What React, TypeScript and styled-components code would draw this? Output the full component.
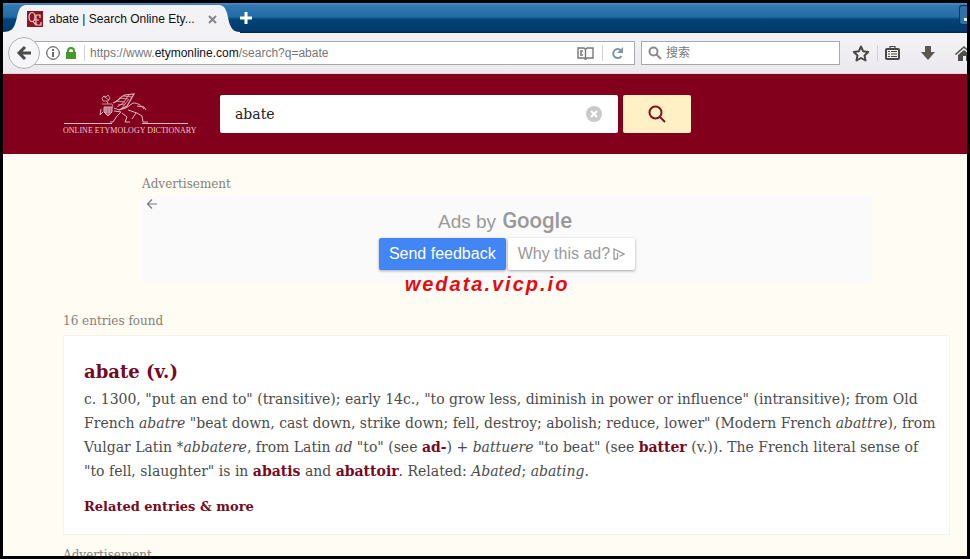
import React from "react";
import styled, { createGlobalStyle } from "styled-components";

const serif = `"DejaVu Serif", serif`;
const sans = `"Liberation Sans", "Noto Sans CJK SC", sans-serif`;

const GlobalStyle = createGlobalStyle`
  *, *::before, *::after { box-sizing: border-box; }
  html, body, #root { height: 100%; }
  body { margin: 0; background: #000; overflow: hidden; }
  button { border: 0; padding: 0; background: none; cursor: pointer; font: inherit; }
  input { border: 0; padding: 0; outline: 0; background: none; min-width: 0; }
  svg { display: block; flex: none; }
`;

const Frame = styled.div`
  height: 100%;
  padding: 3px;
  background: #000;
`;
const Browser = styled.div`
  display: flex;
  flex-direction: column;
  height: 100%;
  overflow: hidden;
  background: #fffcf3;
`;

const TabStrip = styled.div`
  display: flex;
  flex: none;
  height: 30px;
  background: linear-gradient(#4c8dc0 0, #2f78b0 3px, #226ba4 14px, #02457b 16px, #02396a 28px, #022448 30px);
`;
const TabEdge = styled.svg`
  height: 30px;
  fill: #f3f2f5;
`;
const Tab = styled.div`
  display: flex;
  align-items: center;
  width: 191px;
  height: 28px;
  margin-top: 2px;
  background: #f3f2f5;
  font: 12px/16px "Liberation Sans", sans-serif;
  color: #111;
`;
const TabTitle = styled.span`
  flex: 1;
  margin-left: 6px;
  white-space: nowrap;
`;
const StripButton = styled.button`
  display: grid;
  place-items: center;
  width: 12px;
  height: 30px;
`;
const WindowButton = styled.button`
  display: flex;
  align-items: flex-end;
  width: 8px;
  height: 20px;
  margin: 2px 0 0 auto;
  padding: 0 0 3px 4px;
  border: 1px solid #02345d;
  border-right: 0;
  border-radius: 3px 0 0 3px;
  background: #2e71a6;
`;

const Toolbar = styled.div`
  display: flex;
  align-items: center;
  flex: none;
  height: 41px;
  padding-left: 5px;
  overflow: hidden;
  background: linear-gradient(#f4f3f5, #ebe9ee);
  border-bottom: 1px solid #ddd8df;
`;
const BackButton = styled.button`
  z-index: 1;
  display: grid;
  place-items: center;
  flex: none;
  width: 32px;
  height: 32px;
  margin-right: -6px;
  border: 1px solid #b3b1b6;
  border-radius: 50%;
  background: #f6f5f8;
`;
const Field = styled.div<{ $fixed?: boolean }>`
  display: flex;
  align-items: center;
  flex: ${(p) => (p.$fixed ? "0 0 199px" : "1 1 0")};
  height: 24px;
  margin-right: ${(p) => (p.$fixed ? "12px" : "6px")};
  padding: ${(p) => (p.$fixed ? "0 6px" : "0 10px 0 11px")};
  border: 1px solid #aaa8ad;
  background: #fff;
  font: 12px/16px ${sans};
  color: #777;
`;
const Address = styled.div`
  flex: 1;
  margin-left: 5px;
  white-space: nowrap;
  b { font-weight: 400; color: #111; }
`;
const Rule = styled.i<{ $gap: number }>`
  flex: none;
  width: 1px;
  height: 16px;
  margin: 0 ${(p) => p.$gap}px;
  background: #d2d1d5;
`;
const QuickSearch = styled.input`
  flex: 1;
  margin-left: 4px;
  font: 12px/16px ${sans};
  color: #555;
  &::placeholder { color: #777; opacity: 1; }
`;
const Tools = styled.div`
  display: flex;
  align-items: center;
  flex: none;
  width: 115px;
  overflow: hidden;
`;
const ToolButton = styled.button<{ $gap: number }>`
  flex: none;
  margin-right: ${(p) => p.$gap}px;
`;

const SiteHeader = styled.header`
  display: flex;
  align-items: center;
  flex: none;
  height: 80px;
  padding-left: 60px;
  background: #82001b;
`;
const Logo = styled.a`
  flex: none;
  width: 132px;
  margin-right: 25px;
  padding-top: 2px;
  color: #ecc8cf;
  text-decoration: none;
`;
const LogoName = styled.span`
  display: block;
  font: 8px/14px "Liberation Serif", serif;
  white-space: nowrap;
`;
const SearchForm = styled.form`
  display: flex;
  gap: 5px;
  flex: 0 1 471px;
  height: 38px;
`;
const SearchBox = styled.div`
  display: flex;
  align-items: center;
  flex: 1;
  padding: 0 16px 0 15px;
  border-radius: 2px;
  background: #fff;
`;
const SearchInput = styled.input`
  flex: 1;
  font: 14px/24px ${serif};
  color: #222;
`;
const SearchButton = styled.button`
  display: grid;
  place-items: center;
  width: 68px;
  border-radius: 2px;
  background: #fff1c5;
`;

const Main = styled.main`
  flex: 1;
  min-height: 0;
  padding: 20px 17px 0 60px;
  overflow: hidden;
  font-family: ${serif};
`;
const Caption = styled.p`
  margin: 0;
  font-size: 12px;
  line-height: 20px;
  color: #83827e;
`;
const Banner = styled.section`
  margin: 0 78px 26px 79px;
`;
const AdBox = styled.div`
  display: grid;
  grid-template-columns: 20px 1fr 24px;
  align-items: start;
  height: 88px;
  margin: 1px 0 28px;
  padding: 4px 0 0 4px;
  background: #fafafa;
`;
const AdBody = styled.div`
  display: flex;
  flex-direction: column;
  align-items: center;
  font-family: "Liberation Sans", sans-serif;
  color: #999;
`;
const AdTitle = styled.div`
  display: flex;
  align-items: baseline;
  gap: 6px;
  margin: 6px 4px 0 0;
  font-size: 19px;
  line-height: 32px;
`;
const Google = styled.span`
  font: 500 22px/32px Roboto, sans-serif;
`;
const AdActions = styled.div`
  display: flex;
  gap: 2px;
`;
const AdButton = styled.button<{ $primary?: boolean }>`
  display: flex;
  align-items: center;
  gap: 3px;
  height: 32px;
  padding: 0 10px;
  border-radius: 2px;
  font-size: 16px;
  color: ${(p) => (p.$primary ? "#fff" : "#999")};
  background: ${(p) => (p.$primary ? "#4285f4" : "#fff")};
  box-shadow: 0 1px 3px rgba(0, 0, 0, 0.35);
`;
const Watermark = styled.span`
  margin: 2px 40px 0 0;
  font: italic 700 20px/24px "Liberation Sans", sans-serif;
  letter-spacing: 2px;
  color: #e40b12;
`;
const Card = styled.article`
  margin: 4px 0 10px;
  padding: 21px 10px 15px 20px;
  border: 1px solid #f5f2ec;
  background: #fff;
  color: #4c4c4c;
`;
const Term = styled.h2`
  margin: 0;
  font-size: 18px;
  line-height: 30px;
  color: #750a22;
`;
const Definition = styled.p`
  margin: 0 0 12px;
  font-size: 14px;
  line-height: 24px;
`;
const TermLink = styled.a`
  font-weight: 700;
  color: #750a22;
  text-decoration: none;
`;
const MoreLink = styled(TermLink)`
  display: block;
  font-size: 13px;
  line-height: 24px;
`;

const Griffin = () => (
  <svg width="126" height="31" viewBox="0 0 126 31" fill="none" stroke="#e5b7c0" aria-hidden="true">
    <path d="M1 30.500h48M79 30.500h46" />
    <path strokeWidth="0.8" d="M39 5l2-2 2 1 2-2 2 3-2 3h-5zM40 3l6 4M39 11h10l1 2-2 3M44 8l1 3" />
    <path fill="#b8677a" d="M41 14h8v5l-4 4-4-4z" />
    <path d="M43 15v5M46 15v5M38 16l-1 6 3-3" />
    <path strokeWidth="1.200" d="M50 10c6-1 7-7 12-8l9-1-7 12-8 4" />
    <path strokeWidth="0.8" d="M53 8l9 1M56 5l9 1M60 3l9 1M54 14l6-4 6-8M59 15l7-9M55 12l7-1" />
    <path d="M51 15l5 2 7-2 7-5c5 0 8 2 11 6M51 18l7 1-4 4-4 6h-3M59 20l5 4-2 5h5M65 17l9 3 5 3 1 6h5M73 20l-4 6M74 13l7 1 2 3" />
  </svg>
);

export default function App() {
  return (
    <>
      <GlobalStyle />
      <Frame>
        <Browser>
          <TabStrip>
            <TabEdge width="24" viewBox="0 0 24 30" aria-hidden="true">
              <path d="M0 30v-1c9 0 11-4 13-11l2-8c2-6 4-8 9-8v28z" />
            </TabEdge>
            <Tab>
              <svg width="16" height="16" viewBox="0 0 16 16" aria-hidden="true">
                <path fill="#8c1525" d="M0 0h16v16H0z" />
                <g fill="none" stroke="#f3cfc6" strokeWidth="1.2">
                  <ellipse cx="5" cy="6" rx="3" ry="4.500" />
                  <path d="M13 7V4H9v10h5v-3M8 9h4M6 10c1 2 2 3 3 4" />
                </g>
              </svg>
              <TabTitle>abate | Search Online Ety...</TabTitle>
              <StripButton aria-label="Close tab">
                <svg width="9" height="9" viewBox="0 0 9 9" stroke="#85848a" strokeWidth="2">
                  <path d="M1 1l7 7M8 1L1 8" />
                </svg>
              </StripButton>
            </Tab>
            <TabEdge width="22" viewBox="0 0 22 30" aria-hidden="true">
              <path d="M22 30v-1c-7 0-9-4-11-10L9 10C7 4 5 2 0 2v28z" />
            </TabEdge>
            <StripButton aria-label="New tab">
              <svg width="12" height="12" viewBox="0 0 12 12" stroke="#fff" strokeWidth="3">
                <path d="M6 0v12M0 6h12" />
              </svg>
            </StripButton>
            <WindowButton aria-label="Minimize">
              <svg width="4" height="3"><path fill="#fff" d="M0 0h4v3H0z" /></svg>
            </WindowButton>
          </TabStrip>

          <Toolbar>
            <BackButton aria-label="Back">
              <svg width="16" height="16" viewBox="0 0 16 16" fill="none" stroke="#4b4a47" strokeWidth="3">
                <path d="M9 2L3 8l6 6M3 8h12" />
              </svg>
            </BackButton>
            <Field>
              <svg width="14" height="14" viewBox="0 0 14 14" fill="none" stroke="#3c3b3e">
                <circle cx="7" cy="7" r="6.3" />
                <path strokeWidth="1.5" d="M7 3v2M7 6v5" />
              </svg>
              <svg width="24" height="13" viewBox="-5 0 24 13">
                <path fill="#429a2b" d="M1 5h10v7H1z" />
                <path fill="none" stroke="#429a2b" strokeWidth="2" d="M3 6V4a3 3 0 016 0v2" />
              </svg>
              <Rule $gap={0} />
              <Address>https://www.<b>etymonline.com</b>/search?q=abate</Address>
              <svg width="17" height="13" viewBox="0 0 17 13" fill="none" stroke="#77777b" strokeWidth="1.4">
                <path d="M8.500 2.500L7 1H1v10h6l1.500 1.500L10 11h6V1h-6L8.500 2.500V11M3 4h3M3 6h2M3 8h3" />
              </svg>
              <Rule $gap={8} />
              <button aria-label="Reload">
                <svg width="13" height="13" viewBox="0 0 13 13" fill="none" stroke="#8095a5" strokeWidth="2">
                  <path d="M10 3.500A4.500 4.500 0 1010.500 9" />
                  <path fill="#8095a5" stroke="none" d="M12 0v6H6z" />
                </svg>
              </button>
            </Field>
            <Field $fixed>
              <svg width="14" height="14" viewBox="0 0 14 14" fill="none" stroke="#8b8a8d" strokeWidth="2">
                <circle cx="5.500" cy="5.500" r="4" /><path d="M8.500 8.500L13 13" />
              </svg>
              <QuickSearch aria-label="搜索" placeholder="搜索" />
            </Field>
            <Tools>
              <ToolButton $gap={7} aria-label="Bookmark">
                <svg width="18" height="17" viewBox="0 0 18 17" fill="none" stroke="#494844" strokeWidth="2" strokeLinejoin="round">
                  <path d="M9 1.500l2.200 4.800 5 .6-3.700 3.500 1 5.100L9 13l-4.500 2.500 1-5.100L1.800 6.900l5-.6z" />
                </svg>
              </ToolButton>
              <Rule $gap={0} />
              <ToolButton $gap={21} aria-label="Library">
                <svg width="22" height="16" viewBox="-7 0 22 16" fill="none" stroke="#494844">
                  <rect x="1" y="4" width="13" height="10" rx="1" strokeWidth="2" />
                  <path strokeWidth="1.200" d="M5 3V1.500h5V3M3 6.500h2M6 6.500h6M3 9h2M6 9h6M3 11.500h2M6 11.500h6" />
                </svg>
              </ToolButton>
              <ToolButton $gap={20} aria-label="Downloads">
                <svg width="14" height="14" viewBox="0 0 14 14" fill="#5a5850"><path d="M4 0h6v6h4l-7 8-7-8h4z" /></svg>
              </ToolButton>
              <ToolButton $gap={0} aria-label="Home">
                <svg width="18" height="15" viewBox="0 0 18 15" fill="#4f4e49">
                  <path d="M9 0l9 8-1 1-8-7-8 7-1-1zM9 4l6 5v6h-4v-5H8v5H3V9z" />
                </svg>
              </ToolButton>
            </Tools>
          </Toolbar>

          <SiteHeader>
            <Logo href="#home"><Griffin /><LogoName>ONLINE ETYMOLOGY DICTIONARY</LogoName></Logo>
            <SearchForm onSubmit={(e) => e.preventDefault()}>
              <SearchBox>
                <SearchInput aria-label="Search" defaultValue="abate" />
                <button type="button" aria-label="Clear">
                  <svg width="16" height="16" viewBox="0 0 16 16">
                    <circle cx="8" cy="8" r="8" fill="#c9c9c9" />
                    <path stroke="#fff" strokeWidth="2" d="M5 5l6 6M11 5l-6 6" />
                  </svg>
                </button>
              </SearchBox>
              <SearchButton aria-label="Search">
                <svg width="18" height="18" viewBox="0 0 18 18" fill="none" stroke="#82101c" strokeWidth="2">
                  <circle cx="7.500" cy="7.500" r="6" /><path d="M12 12l5 5" />
                </svg>
              </SearchButton>
            </SearchForm>
          </SiteHeader>

          <Main>
            <Banner>
              <Caption>Advertisement</Caption>
              <AdBox>
                <button aria-label="Back to ad">
                  <svg width="12" height="10" viewBox="0 0 12 10" fill="none" stroke="#77777d" strokeWidth="1.200">
                    <path d="M6 .5L1.500 5 6 9.500M2 5h9" />
                  </svg>
                </button>
                <AdBody>
                  <AdTitle>Ads by <Google>Google</Google></AdTitle>
                  <AdActions>
                    <AdButton $primary>Send feedback</AdButton>
                    <AdButton>
                      Why this ad?
                      <svg width="12" height="12" viewBox="0 0 12 12" fill="none" stroke="#999" strokeWidth="1.300">
                        <path d="M4 11H1V1l10 5-4.500 2.500M4.500 5v6" />
                      </svg>
                    </AdButton>
                  </AdActions>
                  <Watermark>wedata.vicp.io</Watermark>
                </AdBody>
              </AdBox>
            </Banner>
            <Caption>16 entries found</Caption>
            <Card>
              <Term>abate (v.)</Term>
              <Definition>
                c. 1300, "put an end to" (transitive); early 14c., "to grow less, diminish in power or influence" (intransitive); from Old<br />
                French <i>abatre</i> "beat down, cast down, strike down; fell, destroy; abolish; reduce, lower" (Modern French <i>abattre</i>), from<br />
                Vulgar Latin <i>*abbatere</i>, from Latin <i>ad</i> "to" (see <TermLink href="#ad">ad-</TermLink>) + <i>battuere</i> "to beat" (see <TermLink href="#batter">batter</TermLink> (v.)). The French literal sense of<br />
                "to fell, slaughter" is in <TermLink href="#abatis">abatis</TermLink> and <TermLink href="#abattoir">abattoir</TermLink>. Related: <i>Abated</i>; <i>abating</i>.
              </Definition>
              <MoreLink href="#related">Related entries &amp; more</MoreLink>
            </Card>
            <Caption>Advertisement</Caption>
          </Main>
        </Browser>
      </Frame>
    </>
  );
}
